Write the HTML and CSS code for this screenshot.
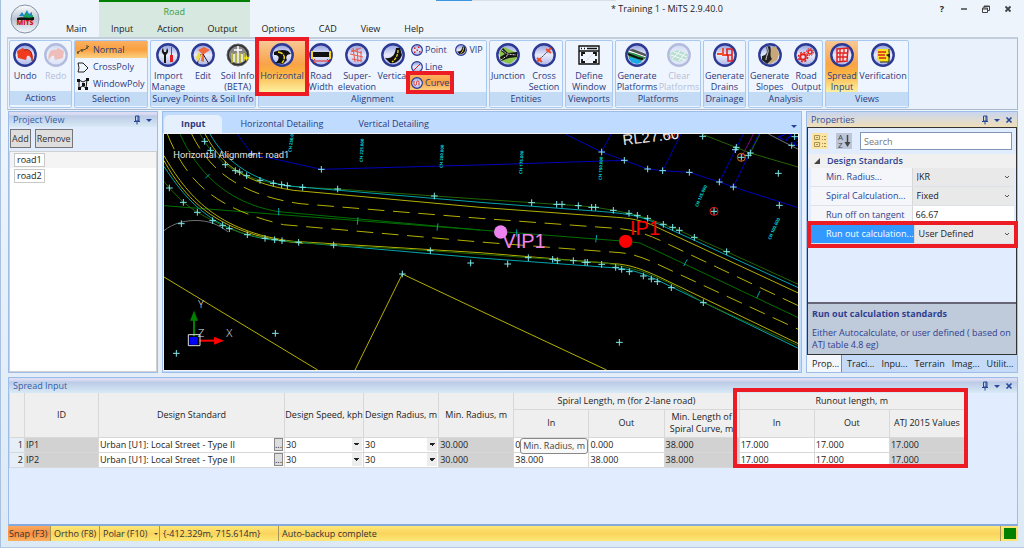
FILE: index.html
```
<!DOCTYPE html>
<html lang="en">

<head>
    <meta charset="UTF-8">
    <meta name="viewport" content="width=device-width, initial-scale=1.0">
    <title>Training 1 - MiTS 2.9.40.0</title>
    <link rel="stylesheet" href="styles.css">
</head>

<body>
    <!-- shared icon parts -->
    <svg class="defs" aria-hidden="true">
        <defs>
            <linearGradient id="discFill" x1="0" y1="0" x2="0" y2="1">
                <stop offset="0" stop-color="#8f9cdc"/>
                <stop offset="0.5" stop-color="#e8ebfb"/>
                <stop offset="1" stop-color="#aab4e6"/>
            </linearGradient>
            <linearGradient id="logoFill" x1="0" y1="0" x2="0" y2="1">
                <stop offset="0" stop-color="#ffffff"/>
                <stop offset="0.5" stop-color="#b9c4d2"/>
                <stop offset="1" stop-color="#f4f8fc"/>
            </linearGradient>
            <symbol id="disc" viewBox="0 0 24 24">
                <circle cx="12" cy="12" r="10.7" fill="url(#discFill)" stroke="#2d3a94" stroke-width="2.4"/>
            </symbol>
            <symbol id="pin" viewBox="0 0 8 10">
                <path d="M2.500 1h3.500v5h-3.500zM5 1v5M1 6.500h6M4 6.500v3" fill="none" stroke="#24479a"/>
            </symbol>
            <symbol id="down" viewBox="0 0 8 10"><path d="M1 4h6L4 7z" fill="#24479a"/></symbol>
            <symbol id="close" viewBox="0 0 8 10"><path d="M1.500 2.500l5 5m0-5l-5 5" stroke="#24479a" stroke-width="1.600"/></symbol>
            <symbol id="chevron" viewBox="0 0 6 6"><path d="M1 2l2 2 2-2" fill="none" stroke="#555"/></symbol>
        </defs>
    </svg>

    <header class="header">
        <button type="button" class="app-button" aria-label="MiTS menu">
            <svg viewBox="0 0 30 30">
                <circle cx="15" cy="15" r="14" fill="url(#logoFill)" stroke="#8594a8"/>
                <path d="M9 12l3-4 2 3 3-5 2 4 3-2v5z" fill="#1d86c8"/>
                <path d="M13 13l4-5 2 4 4-1v4h-9z" fill="#18a558"/>
                <path d="M7 14c4-2 12 1 17-1v3H7z" fill="#111"/>
                <text x="15" y="21" class="logo-text">MiTS</text>
            </svg>
        </button>
        <nav class="tabs">
            <a href="#main">Main</a>
            <div class="context">
                <span class="context-title">Road</span>
                <div class="context-tabs">
                    <a href="#input">Input</a>
                    <a href="#action">Action</a>
                    <a href="#output">Output</a>
                </div>
            </div>
            <a href="#options">Options</a>
            <a href="#cad">CAD</a>
            <a href="#view">View</a>
            <a href="#help">Help</a>
        </nav>
        <div class="title-area">
            <div class="progress"></div>
            <h1>* Training 1 - MiTS 2.9.40.0</h1>
        </div>
        <div class="window-buttons">
            <button type="button" aria-label="Help">?</button>
            <button type="button" aria-label="Minimize"><svg viewBox="0 0 10 10"><path d="M2 5h6" stroke="#444" stroke-width="1.500"/></svg></button>
            <button type="button" aria-label="Restore"><svg viewBox="0 0 10 10"><path d="M1.500 4h5v4.500h-5zM3 4V2h5.500v4.500H7M1.500 5h5M3 2.500h5" fill="none" stroke="#444"/></svg></button>
            <button type="button" aria-label="Close"><svg viewBox="0 0 10 10"><path d="M2.500 2.500l5 5m0-5l-5 5" stroke="#444" stroke-width="1.800"/></svg></button>
        </div>
    </header>

    <section class="ribbon">
        <div class="group actions">
            <div class="tools">
                <button type="button" class="tool"><svg viewBox="0 0 24 24"><use href="#disc"/><path d="M4 8l6-3 2 2c6-1 9 4 7 11-1-4-3-6-5-5l-1 4-8-2z" fill="#f03c1e"/><path d="M11 7c6-2 9 3 8 11" fill="none" stroke="#a01808"/></svg><span>Undo</span></button>
                <button type="button" class="tool" disabled><svg viewBox="0 0 24 24"><use href="#disc"/><path d="M20 8l-6-3-2 2c-6-1-9 4-7 11 1-4 3-6 5-5l1 4 8-2z" fill="#f03c1e"/></svg><span>Redo</span></button>
            </div>
            <h2>Actions</h2>
        </div>
        <div class="group selection">
            <div class="tools list">
                <button type="button" class="small active"><svg viewBox="0 0 12 12"><path d="M0 9c3-1 2-3 5-3s4-1 7-4" fill="none" stroke="#443"/><path d="M1 7v3M5 5v3M10 1v4" stroke="#443"/></svg>Normal</button>
                <button type="button" class="small"><svg viewBox="0 0 12 12"><path d="M1 2h5l5 5-4 4H1l1-4z" fill="none" stroke="#222"/></svg>CrossPoly</button>
                <button type="button" class="small"><svg viewBox="0 0 12 12"><path d="M2 2l4 2 4-2-1 8-3-2-4 2z" fill="none" stroke="#111"/><path d="M0 1h3v3H0zM9 0h3v3H9zM1 9h3v3H1zM8 9h3v3H8zM5 5h3v3H5z" fill="#111"/></svg>WindowPoly</button>
            </div>
            <h2>Selection</h2>
        </div>
        <div class="group survey">
            <div class="tools">
                <button type="button" class="tool"><svg viewBox="0 0 24 24"><use href="#disc"/><path d="M7 5l1 4h2l1-4c2 3 1 5-1 7v8H8v-8C6 10 5 8 7 5z" fill="#151515"/><path d="M15 4h1v8h-1zM14 12h3v7h-3z" fill="#e02020"/></svg><span>Import<br>Manage</span></button>
                <button type="button" class="tool"><svg viewBox="0 0 24 24"><use href="#disc"/><path d="M7 7l6-3 6 3-6 4v8l-3-1 1-7z" fill="#f26a3c"/><path d="M10 11l-4 10M12 11l6 10" stroke="#222"/><path d="M8 9l-3 5 2 5 3-6z" fill="#f2d83c"/></svg><span>Edit</span></button>
                <button type="button" class="tool"><svg viewBox="0 0 24 24"><circle cx="12" cy="12" r="11" fill="#303030" stroke="#666"/><circle cx="12" cy="12" r="9" fill="#888"/><path d="M12 3v17M8 7h8M8 11v8M16 11v8" stroke="#fff" stroke-width="1.500"/><path d="M6 10v10M10 10v10M14 10v10M18 10v8" stroke="#caca1c" stroke-width="1.300"/><path d="M18 15h5m-2.500-2.500v5" stroke="#f5e61c" stroke-width="1.500"/></svg><span>Soil Info<br>(BETA)</span></button>
            </div>
            <h2>Survey Points &amp; Soil Info</h2>
        </div>
        <div class="group alignment">
            <div class="tools">
                <button type="button" class="tool active marked"><svg viewBox="0 0 24 24"><use href="#disc"/><path d="M4 9c5-2 9-3 14-1l3 3c-4 0-6 3-4 6l-4 4-8-1c5-3 5-9-1-8z" fill="#111"/><path d="M8 9c7 1 8 6 4 11" fill="none" stroke="#f5d31c" stroke-width="1.400" stroke-dasharray="5 1"/></svg><span>Horizontal</span></button>
                <button type="button" class="tool"><svg viewBox="0 0 24 24"><use href="#disc"/><path d="M4 9h16v5H4z" fill="#111"/><path d="M3 8v8M21 8v8" stroke="#f5d31c" stroke-width="2"/><path d="M4 18h16M6 16l-2 2 2 2m12-4l2 2-2 2" fill="none" stroke="#e02020"/></svg><span>Road<br>Width</span></button>
                <button type="button" class="tool wide"><svg viewBox="0 0 24 24"><use href="#disc"/><path d="M6 7l11 3M5 11l13 3M7 16l10 2M8 5l2 14M12 5l1 14M16 8v11M6 9l10-4" fill="none" stroke="#e85a4c"/></svg><span>Super-<br>elevation</span></button>
                <button type="button" class="tool"><svg viewBox="0 0 24 24"><use href="#disc"/><path d="M15 5h4l2 7c-2 6-7 9-12 8l-5-5c7 1 10-3 11-10z" fill="#111"/><path d="M17 7c0 5-2 9-6 12" fill="none" stroke="#f5d31c" stroke-width="1.300" stroke-dasharray="3 1"/></svg><span>Vertical</span></button>
                <div class="list entities-list">
                    <button type="button" class="small"><svg viewBox="0 0 24 24"><use href="#disc"/><path d="M6 7h3v3H6zM14 5h3v3h-3zM11 11h3v3h-3zM6 15h3v3H6zM16 14h3v3h-3z" fill="#e02020"/></svg>Point</button>
                    <button type="button" class="small"><svg viewBox="0 0 24 24"><use href="#disc"/><path d="M6 18L18 6" stroke="#e02020" stroke-width="2"/></svg>Line</button>
                    <button type="button" class="small active marked"><svg viewBox="0 0 24 24"><use href="#disc"/><path d="M6 8v5c0 5 5 5 5 0v-2c0-4 5-4 5 0v6" fill="none" stroke="#e02020" stroke-width="2"/></svg>Curve</button>
                </div>
                <div class="list">
                    <button type="button" class="small"><svg viewBox="0 0 24 24"><use href="#disc"/><path d="M15 5h4l2 7c-2 6-7 9-12 8l-5-5c7 1 10-3 11-10z" fill="#111"/><path d="M17 7c0 5-2 9-6 12" fill="none" stroke="#f5d31c" stroke-width="2"/></svg>VIP</button>
                </div>
            </div>
            <h2>Alignment</h2>
        </div>
        <div class="group entities">
            <div class="tools">
                <button type="button" class="tool"><svg viewBox="0 0 24 24"><use href="#disc"/><path d="M3 9l5-5 13 6v5l-7 6-9-3z" fill="#8bc34a"/><path d="M7 5l5 5 9-1v5l-8 1-8 3-1-4 5-3-4-3z" fill="#151515"/><path d="M6 7l5 4 9 1M5 17l7-5" fill="none" stroke="#ddd" stroke-dasharray="2 1"/></svg><span>Junction</span></button>
                <button type="button" class="tool"><svg viewBox="0 0 24 24"><use href="#disc"/><path d="M8 16l8-8" stroke="#333" stroke-dasharray="2 1"/><path d="M14 6l5 4M15 9l4-4M5 15l5 4M5 19l4-4" stroke="#f04a28" stroke-width="1.800"/></svg><span>Cross<br>Section</span></button>
            </div>
            <h2>Entities</h2>
        </div>
        <div class="group viewports">
            <div class="tools">
                <button type="button" class="tool"><svg viewBox="0 0 24 24"><path d="M2 3h20v18H2zM2 8h20" fill="none" stroke="#111" stroke-width="1.400"/><path d="M4 5.500h1m2 0h1m2 0h10" stroke="#111" stroke-width="1.300"/><path d="M5 13v-3h3M16 10h3v3M5 16v3h3M16 19h3v-3" fill="none" stroke="#111" stroke-width="1.800"/><path d="M9 18l7-7" stroke="#ddd"/></svg><span>Define<br>Window</span></button>
            </div>
            <h2>Viewports</h2>
        </div>
        <div class="group platforms">
            <div class="tools">
                <button type="button" class="tool"><svg viewBox="0 0 24 24"><use href="#disc"/><path d="M3 9l18 3v3l-8 5-9-4z" fill="#27984b"/><path d="M3 7l5-1 13 5v4z" fill="#555"/><path d="M4 8l17 6" stroke="#fff"/><path d="M4 14l9 2 4 3-5 2-6-2z" fill="#19a9e5"/><path d="M3 11l10 4 5 1" fill="none" stroke="#111" stroke-width="2"/></svg><span>Generate<br>Platforms</span></button>
                <button type="button" class="tool" disabled><svg viewBox="0 0 24 24"><use href="#disc"/><path d="M3 10l8-3 10 4v4l-9 4-8-3z" fill="#48b068"/><path d="M4 12l14 5M7 9l13 5M5 16l8-8M12 18l6-8" stroke="#fff"/></svg><span>Clear<br>Platforms</span></button>
            </div>
            <h2>Platforms</h2>
        </div>
        <div class="group drainage">
            <div class="tools">
                <button type="button" class="tool"><svg viewBox="0 0 24 24"><use href="#disc"/><path d="M4 11h6M10 5v7h5" fill="none" stroke="#f04a28" stroke-width="1.800"/><path d="M14 6h5v6h-5zM15 12h4v6h-4z" fill="none" stroke="#e02020" stroke-width="1.600"/></svg><span>Generate<br>Drains</span></button>
            </div>
            <h2>Drainage</h2>
        </div>
        <div class="group analysis">
            <div class="tools">
                <button type="button" class="tool"><svg viewBox="0 0 24 24"><use href="#disc"/><path d="M13 5l5-2 3 8-2 6-7 4-5-3z" fill="#c9a878"/><path d="M4 13c5-1 6-4 4-9l4-1c2 5-1 9 2 13l-5 5-5-4z" fill="#222"/><path d="M9 4c3 5-1 8-1 13" fill="none" stroke="#ddd"/></svg><span>Generate<br>Slopes</span></button>
                <button type="button" class="tool"><svg viewBox="0 0 24 24"><use href="#disc"/><g fill="none" stroke="#e5231c"><circle cx="9" cy="14" r="2.800" stroke-width="2"/><circle cx="9" cy="14" r="4.600" stroke-width="1.600" stroke-dasharray="2 1.600"/><circle cx="16" cy="9" r="2" stroke-width="1.600"/><circle cx="16" cy="9" r="3.600" stroke-dasharray="1.500 1.300"/></g></svg><span>Road<br>Output</span></button>
            </div>
            <h2>Analysis</h2>
        </div>
        <div class="group views">
            <div class="tools">
                <button type="button" class="tool active"><svg viewBox="0 0 24 24"><use href="#disc"/><path d="M7 6l11-1-1 13-10 1z" fill="#fbe3e3" stroke="#e02020" stroke-width="1.500"/><path d="M7 10h10M7 14h10M10 6v12M14 6v5M13 11v7" stroke="#e02020" stroke-width="1.300"/></svg><span>Spread<br>Input</span></button>
                <button type="button" class="tool"><svg viewBox="0 0 24 24"><use href="#disc"/><path d="M6 6h12v13H9l-3-3z" fill="#f8e21c"/><path d="M7 9h8M7 12h7M8 15h7" stroke="#d82020" stroke-width="1.500"/><path d="M18 6v4M18 14v5H9" fill="none" stroke="#222"/><path d="M15 12l4-2v5z" fill="#222"/></svg><span>Verification</span></button>
            </div>
            <h2>Views</h2>
        </div>
    </section>

    <main class="dock">
        <aside class="panel project">
            <div class="panel-title"><h2>Project View</h2><svg><use href="#pin"/></svg><svg><use href="#down"/></svg></div>
            <div class="project-buttons">
                <button type="button">Add</button>
                <button type="button">Remove</button>
            </div>
            <ul class="roads">
                <li class="selected"><span>road1</span></li>
                <li><span>road2</span></li>
            </ul>
        </aside>

        <section class="panel drawing">
            <div class="drawing-tabs">
                <button type="button" class="current">Input</button>
                <button type="button">Horizontal Detailing</button>
                <button type="button">Vertical Detailing</button>
                <svg class="tab-menu"><use href="#down"/></svg>
            </div>
            <svg class="canvas" viewBox="12 78 1905 708" preserveAspectRatio="xMinYMin slice">
                <defs>
                    <marker id="plus" markerUnits="userSpaceOnUse" markerWidth="22" markerHeight="22" refX="11" refY="11" viewBox="0 0 22 22">
                        <path d="M1 11h20M11 1v20" stroke="#7fe9ea" stroke-width="3"/>
                    </marker>
                </defs>
                <!-- lot boundaries -->
                <g class="blue">
                    <path d="M232 78L275 138 484 184 990 170 1393 157"/>
                    <path d="M1215 78L1325 132 1393 157 1463 183 1508 188 1588 193 1678 222 1720 237 1917 300"/>
                    <path d="M1353 78L1325 132M1563 78L1508 188M1750 78L1678 222M1796 78L1720 237"/>
                </g>
                <path class="magenta" d="M1780 78L1744 148"/>
                <path class="lime" d="M1625 78L1771 135 1917 178M1800 78L1768 140"/>
                <path class="gray" d="M1825 78L1917 125M12 368C40 345 80 335 120 338S180 355 205 372"/>
                <path class="yellow" d="M12 507L473 786M585 786L727 498 990 622 1340 786"/>

                <!-- road edges -->
                <path class="lime" d="M120 78L134 100 152 127 196 170 226 188 260 203 300 217 340 226 382 233 428 238 533 243 823 264 1115 284 1190 289 1255 293 1307 298 1360 307 1407 316 1463 331 1510 349 1558 367 1603 388 1700 431 1917 530"/>
                <path class="cyan" d="M150 78C190 150 265 215 385 234L960 283 1290 308C1400 316 1430 320 1500 350L1917 540"/>
                <path class="yellow" d="M135 78C175 150 230 222 400 247L960 298 1370 328C1430 332 1460 342 1500 362L1917 556"/>
                <path class="yellow dashed" d="M95 78C140 170 220 258 420 287L960 331 1380 362C1420 366 1460 378 1500 397L1917 594"/>
                <path class="green" d="M60 78C110 190 200 285 355 311L960 366M12 293L960 366 1397 400 1440 405 1917 630"/>
                <path class="yellow dashed" d="M22 78C80 220 160 300 370 350L960 402 1380 434C1420 437 1460 453 1500 472L1917 665"/>
                <path class="yellow" d="M12 143C80 260 170 372 400 400L960 434 1360 467C1410 469 1450 485 1500 508L1917 708"/>
                <path class="yellow" d="M12 158C80 280 180 385 430 406"/>
                <path class="cyan" d="M12 175C80 280 170 385 370 399L960 450 1370 480C1410 482 1460 500 1500 520L1917 722"/>
                <path class="lime" d="M12 220L28 240 70 283 112 313 158 338 208 362 262 380 315 391 366 398 416 403 521 411 811 428 1105 449 1240 458 1325 463 1385 474 1450 491 1530 526 1632 584 1917 714"/>
                <path class="cyan" d="M136 211l13-13M356 300v22M594 328l-2 22M834 346l-3 22M1070 364v22M1310 381l-3 22M1582 454l-11 20M1800 549l-10 21"/>

                <!-- surveyed points -->
                <path class="points" d="M134 100L152 127 196 170 226 188 239 192 260 203 300 217 340 226 365 230 382 233 428 238 533 243 823 264 1115 284 1190 289 1206 289 1255 293 1295 298 1307 298 1360 307 1407 316 1432 322 1463 331 1510 349 1538 358 1558 367 1603 388 1700 431"/>
                <path class="points" d="M28 240L70 283 112 313 158 338 188 352 208 362 262 380 315 391 344 395 366 398 416 403 521 411 811 428 1105 449 1178 454 1192 458 1240 458 1275 463 1282 463 1325 469 1367 478 1385 484 1408 491 1450 504 1474 513 1492 521 1534 539 1630 584"/>
                <path class="points" d="M64 347L49 736 346 676 727 498 932 465 1043 468 1378 703 275 138 484 184 1325 132 1393 157 1463 183 1508 188 1588 193 1678 222 1720 237 1858 292 1662 310 1855 196 1628 85 1729 118 1726 125 1771 135 1765 142 1744 148 1895 112 1904 86"/>
                <path class="red" d="M1650 310a12 12 0 1 0 24 0a12 12 0 1 0-24 0M1520 78a12 12 0 0 0 24 0"/>
                <circle class="orange" cx="1744" cy="148" r="12"/>

                <!-- chainages and labels -->
                <g class="chainage">
                    <text transform="translate(394 133) rotate(-82)">CH 250.000</text>
                    <text transform="translate(608 162) rotate(-87)">CH 225.000</text>
                    <text transform="translate(848 180) rotate(-87)">CH 200.000</text>
                    <text transform="translate(1087 198) rotate(-87)">CH 175.000</text>
                    <text transform="translate(1325 216) rotate(-87)">CH 150.000</text>
                    <text transform="translate(1613 298) rotate(-66)">CH 125.000</text>
                    <text transform="translate(1832 396) rotate(-66)">CH 100.000</text>
                </g>
                <text class="level" transform="translate(1390 112) rotate(-7)">RL27.60</text>
                <text class="level-blue" transform="translate(1853 88) rotate(24)">27.3</text>
                <text class="caption" x="40" y="151">Horizontal Alignment: road1</text>
                <circle cx="1022" cy="372" r="20" fill="#ee82ee"/>
                <text class="vip" x="1027" y="419">VIP1</text>
                <circle cx="1397" cy="400" r="20" fill="#f00"/>
                <text class="ip" x="1410" y="381">IP1</text>

                <!-- axis tripod -->
                <path d="M102 685v-50" stroke="#008000" stroke-width="6"/>
                <path d="M90 638l12-30 12 30z" fill="#008000"/>
                <path d="M118 698h46" stroke="#f00" stroke-width="6"/>
                <path d="M162 686l30 12-30 12z" fill="#f00"/>
                <path d="M85 680h35v33H85z" fill="none" stroke="#ddd" stroke-width="3"/>
                <path d="M89 687h24v23H89z" fill="#00f"/>
                <g class="axis">
                    <text x="114" y="599">Y</text>
                    <text x="113" y="686">Z</text>
                    <text x="199" y="686">X</text>
                </g>
            </svg>
        </section>

        <aside class="panel properties">
            <div class="panel-title warm"><h2>Properties</h2><svg><use href="#pin"/></svg><svg><use href="#down"/></svg><svg><use href="#close"/></svg></div>
            <div class="property-box">
                <div class="property-tools">
                    <button type="button" class="categories" aria-label="Categorized"><svg viewBox="0 0 16 16"><path d="M2.500 2.500h5v4h-5zM2.500 9.500h5v4h-5zM4 4.500h2M4 11.500h2M10 3.500h1m1 0h2M10 6.500h1m1 0h2M10 10.500h1m1 0h2M10 13.500h1m1 0h2" fill="none" stroke="#a8905c"/></svg></button>
                    <button type="button" class="sort" aria-label="Sort"><svg viewBox="0 0 16 16"><text x="2" y="7">A</text><text x="2" y="15">Z</text><path d="M11.500 2v9" stroke="#444" stroke-width="1.500"/><path d="M8.500 9h6l-3 5z" fill="#444"/></svg></button>
                    <input type="text" placeholder="Search" aria-label="Search">
                </div>
                <div class="property-head"><svg viewBox="0 0 6 6"><path d="M6 0v6H0z" fill="#444"/></svg>Design Standards</div>
                <div class="property">
                    <label for="minRadius">Min. Radius...</label>
                    <div class="value"><select id="minRadius"><option>JKR</option></select><svg><use href="#chevron"/></svg></div>
                </div>
                <div class="property">
                    <label for="spiral">Spiral Calculation...</label>
                    <div class="value"><select id="spiral"><option>Fixed</option></select><svg><use href="#chevron"/></svg></div>
                </div>
                <div class="property">
                    <label for="runoff">Run off on tangent</label>
                    <input type="text" id="runoff" value="66.67">
                </div>
                <div class="property chosen marked">
                    <label for="runout">Run out calculation...</label>
                    <div class="value"><select id="runout"><option>User Defined</option></select><svg><use href="#chevron"/></svg></div>
                </div>
                <div class="property-help">
                    <h3>Run out calculation standards</h3>
                    <p>Either Autocalculate, or user defined ( based on ATJ table 4.8 eg)</p>
                </div>
            </div>
            <div class="property-tabs">
                <button type="button" class="current">Prop...</button>
                <button type="button">Traci...</button>
                <button type="button">Inpu...</button>
                <button type="button">Terrain</button>
                <button type="button">Imag...</button>
                <button type="button">Utilit...</button>
            </div>
        </aside>
    </main>

    <section class="panel spread">
        <div class="panel-title"><h2>Spread Input</h2><svg><use href="#pin"/></svg><svg><use href="#down"/></svg><svg><use href="#close"/></svg></div>
        <div class="sheet">
            <table>
                <colgroup>
                    <col class="col-number"><col class="col-id"><col class="col-standard"><col class="col-speed"><col><col><col><col><col><col><col><col>
                </colgroup>
                <thead>
                    <tr class="head-top">
                        <th rowspan="2"></th>
                        <th rowspan="2">ID</th>
                        <th rowspan="2">Design Standard</th>
                        <th rowspan="2">Design Speed, kph</th>
                        <th rowspan="2">Design Radius, m</th>
                        <th rowspan="2">Min. Radius, m</th>
                        <th colspan="3">Spiral Length, m (for 2-lane road)</th>
                        <th colspan="3">Runout length, m</th>
                    </tr>
                    <tr class="head-bottom">
                        <th>In</th>
                        <th>Out</th>
                        <th>Min. Length of Spiral Curve, m</th>
                        <th>In</th>
                        <th>Out</th>
                        <th>ATJ 2015 Values</th>
                    </tr>
                </thead>
                <tbody>
                    <tr>
                        <th>1</th>
                        <td class="locked">IP1</td>
                        <td><div class="cell">Urban [U1]: Local Street - Type II<button type="button" class="more" aria-label="Choose standard">...</button></div></td>
                        <td><select aria-label="Design speed 1"><option>30</option></select></td>
                        <td><select aria-label="Design radius 1"><option>30</option></select></td>
                        <td class="locked">30.000</td>
                        <td><div class="cell">0.000<span class="tooltip">Min. Radius, m</span></div></td>
                        <td>0.000</td>
                        <td class="locked">38.000</td>
                        <td>17.000</td>
                        <td>17.000</td>
                        <td class="locked">17.000</td>
                    </tr>
                    <tr>
                        <th>2</th>
                        <td class="locked">IP2</td>
                        <td><div class="cell">Urban [U1]: Local Street - Type II<button type="button" class="more" aria-label="Choose standard">...</button></div></td>
                        <td><select aria-label="Design speed 2"><option>30</option></select></td>
                        <td><select aria-label="Design radius 2"><option>30</option></select></td>
                        <td class="locked">30.000</td>
                        <td>38.000</td>
                        <td>38.000</td>
                        <td class="locked">38.000</td>
                        <td>17.000</td>
                        <td>17.000</td>
                        <td class="locked">17.000</td>
                    </tr>
                </tbody>
            </table>
            <div class="runout-mark"></div>
        </div>
    </section>

    <footer class="status">
        <button type="button" class="snap">Snap (F3)</button>
        <button type="button" class="ortho">Ortho (F8)</button>
        <button type="button" class="polar">Polar (F10)<svg viewBox="0 0 6 6"><path d="M1 2h4L3 4z" fill="#444"/></svg></button>
        <span class="coords">{-412.329m, 715.614m}</span>
        <span class="message">Auto-backup complete</span>
        <span class="light"></span>
    </footer>
</body>

</html>
```
FILE: styles.css
```
* {
    box-sizing: border-box;
}

body {
    font-family: 'Open Sans', 'Noto Sans', sans-serif;
    font-size: 9px;
    line-height: 12px;
    color: #222;
    margin: 0;
    padding: 0 6px 6px 7px;
    height: 100vh;
    display: flex;
    flex-direction: column;
    background: linear-gradient(#edf4fc 110px, #dceaf6);
    border-left: 1px solid #a9c1e0;
    border-bottom: 1px solid #b5cae2;
    overflow: hidden;
    white-space: nowrap;
}

h1, h2, h3, p, ul {
    font-size: inherit;
    font-weight: normal;
    margin: 0;
    padding: 0;
}

button, input, select {
    font: inherit;
    color: inherit;
    margin: 0;
    padding: 0;
    border: 0;
    background: none;
    border-radius: 0;
}

a {
    color: inherit;
    text-decoration: none;
}

svg {
    display: block;
    flex: none;
}

.defs {
    position: absolute;
    width: 0;
    height: 0;
}

.marked {
    outline: 4px solid #ed1c24;
    position: relative;
    z-index: 2;
}

/* title and menu tabs */
.header {
    height: 37px;
    display: flex;
    flex: none;
}

.app-button {
    width: 46px;
    padding: 3px 2px;
}

.app-button svg {
    width: 30px;
    height: 30px;
}

.logo-text {
    font-size: 7px;
    font-weight: 800;
    fill: #d01818;
    text-anchor: middle;
}

.tabs {
    display: flex;
    align-items: flex-end;
}

.tabs a {
    padding: 2px 12px 0;
    height: 16px;
}

.context {
    height: 37px;
    border-top: 2px solid #008000;
    background-color: #d7e8e0;
    display: flex;
    flex-direction: column;
    justify-content: space-between;
}

.context-title {
    text-align: center;
    color: #3a9b3a;
    padding-top: 4px;
}

.context-tabs {
    display: flex;
}

.title-area {
    flex: 1;
    text-align: center;
}

.progress {
    height: 1px;
    width: 180px;
    background: linear-gradient(90deg, #3c96e0 36px, #dcdfe4 36px);
}

.title-area h1 {
    padding-top: 2px;
}

.window-buttons {
    width: 120px;
    display: flex;
    justify-content: flex-end;
    gap: 2px;
    height: 17px;
    align-items: center;
}

.window-buttons button {
    width: 20px;
    font-weight: bold;
    display: flex;
    justify-content: center;
}

.window-buttons svg {
    width: 10px;
    height: 10px;
}

/* ribbon */
.ribbon {
    height: 73px;
    flex: none;
    display: flex;
    gap: 2px;
    padding: 1px 0 1px 1px;
    background-color: #e9f2fc;
    border: 1px solid #a9b8ca;
    border-top: 2px solid #c2cedc;
    border-left-color: #c2cedc;
    color: #2b3a80;
    margin-left: -1px;
}

.group {
    display: flex;
    flex-direction: column;
    flex: none;
    border: 1px solid #a9c9f0;
    border-radius: 2px;
    background-color: #eef5fe;
}

.group h2 {
    flex: 1;
    text-align: center;
    background-color: #c3dbf4;
    line-height: 14px;
    margin-bottom: 2px;
}

.tools {
    display: flex;
    height: 51px;
}

.tool {
    flex: 1 1 0;
    min-width: 0;
    display: flex;
    flex-direction: column;
    align-items: center;
    padding-top: 2px;
    line-height: 11px;
}

.tool svg {
    width: 24px;
    height: 24px;
    margin-bottom: 3px;
}

.tool:disabled {
    opacity: 0.3;
}

.active {
    background: linear-gradient(#f8c896, #f9a348 45%, #fbb040 60%, #fdf0a0);
}

.list {
    display: flex;
    flex-direction: column;
}

.small {
    height: 17px;
    display: flex;
    align-items: center;
    gap: 4px;
    padding: 0 2px;
}

.small svg {
    width: 12px;
    height: 12px;
}

.small.active {
    background: linear-gradient(#fbb060, #f9a040 50%, #fdd080);
}

.actions { width: 63px; }
.selection { width: 74px; }
.survey { width: 106px; }
.alignment { width: 229px; }
.entities { width: 74px; }
.viewports { width: 48px; }
.platforms { width: 86px; }
.drainage { width: 43px; }
.analysis { width: 75px; }
.views { width: 84px; }

.alignment .tool {
    flex: 0 0 32px;
}

.alignment .tool.wide {
    flex-basis: 40px;
}

.alignment .tool.active {
    flex-basis: 46px;
}

.alignment .small {
    gap: 2px;
    padding: 0 1px;
}

.entities-list {
    margin: 0 4px 0 1px;
}

.entities-list .marked {
    height: 15px;
}

.analysis .tool:first-child {
    flex-grow: 1.3;
}

.views .active {
    flex: none;
    width: 32px;
}

/* docked panels */
.dock {
    flex: 1;
    min-height: 0;
    display: flex;
    gap: 4px;
    padding: 1px 0 4px;
}

.panel {
    display: flex;
    flex-direction: column;
    border: 1px solid #9dbde8;
    background-color: #e1edfe;
    min-width: 0;
}

.panel-title {
    display: flex;
    align-items: center;
    gap: 2px;
    height: 15px;
    flex: none;
    padding: 0 3px 0 4px;
    color: #3060a8;
    background: linear-gradient(#dcdcf4 2px, #bccbe6 4px, #d8e9f6);
}

.panel-title h2 {
    flex: 1;
}

.panel-title svg {
    width: 10px;
    height: 10px;
}

.warm {
    background: linear-gradient(#c9d6f0, #f0dfb8);
    color: #34509a;
}

.project {
    width: 150px;
    flex: none;
}

.project-buttons {
    display: flex;
    gap: 4px;
    padding: 2px 1px 3px;
}

.project-buttons button {
    height: 19px;
    padding: 0 1px;
    border: 1px solid #777;
    background-color: #dedede;
    color: #333;
}

.roads {
    flex: 1;
    background-color: #fff;
    border: 1px solid #d0d0d0;
    list-style: none;
}

.roads li {
    height: 16px;
    padding: 1px 4px;
    display: flex;
}

.roads span {
    border: 1px solid #c8c8c8;
    padding: 0 2px;
    line-height: 12px;
    background-color: #fff;
}

.roads .selected {
    background-color: #f4f4f4;
}

.drawing {
    flex: 1;
    padding: 3px 2px 1px 0;
    background-color: #bfdbff;
}

.drawing-tabs {
    height: 18px;
    flex: none;
    display: flex;
    color: #2b3a80;
}

.drawing-tabs button {
    padding: 0 17px;
    margin-left: 1px;
}

.drawing-tabs .current {
    font-weight: bold;
    background-color: #e6f0fc;
    border-radius: 5px 5px 0 0;
}

.tab-menu {
    width: 10px;
    height: 10px;
    margin: 6px 0 0 auto;
}

.canvas {
    flex: 1;
    min-height: 0;
    width: 100%;
    background-color: #000;
    border: 1px solid #f4f4f4;
    fill: none;
    stroke-width: 3;
}

.canvas text {
    stroke: none;
}

.blue { stroke: #0000b8; }
.magenta { stroke: #800080; }
.lime { stroke: #246400; }
.green { stroke: #007000; }
.gray { stroke: #707070; }
.yellow { stroke: #b4b000; }
.cyan { stroke: #00a4ac; }
.red { stroke: #f01818; }
.orange { stroke: #e07020; }

.dashed {
    stroke-dasharray: 50 26;
}

.canvas .points {
    marker: url(#plus);
}

.chainage {
    font-size: 13px;
    font-weight: bold;
    fill: #00d8dc;
}

.level {
    font: 45px 'Liberation Sans', sans-serif;
    fill: #e8e8e8;
}

.level-blue {
    font: 36px 'Liberation Sans', sans-serif;
    fill: #0000e0;
}

.caption {
    font: 28px Roboto, sans-serif;
    fill: #e4e4e4;
}

.vip, .ip {
    font: 60px 'Liberation Sans', sans-serif;
    fill: #ee82ee;
}

.ip {
    fill: #f00;
}

.axis {
    font: 300 34px 'Open Sans', sans-serif;
    fill: #e0e0e0;
}

/* property grid */
.properties {
    width: 212px;
    flex: none;
}

.property-box {
    flex: 1;
    min-height: 0;
    display: flex;
    flex-direction: column;
    border: 1px solid #333;
    color: #2f3f8f;
}

.property-tools {
    height: 26px;
    flex: none;
    display: flex;
    align-items: center;
    gap: 8px;
    padding: 0 4px;
}

.property-tools button {
    width: 16px;
    height: 16px;
    background-color: #fbe5a0;
}

.property-tools .sort {
    background-color: #bcc6d6;
}

.sort text {
    font-size: 8px;
    fill: #444;
}

.property-tools input {
    flex: 1;
    min-width: 0;
    height: 18px;
    border: 1px solid #8098b8;
    background-color: #fff;
    padding: 0 3px;
}

.property-tools input::placeholder {
    color: #777;
}

.property-head {
    height: 14px;
    display: flex;
    align-items: center;
    gap: 7px;
    padding-left: 6px;
    font-weight: 600;
    background-color: #f0f0f0;
}

.property-head svg {
    width: 6px;
    height: 6px;
}

.property {
    height: 19px;
    flex: none;
    display: flex;
    background-color: #f4f6fa;
    border-bottom: 1px solid #dde2ea;
    margin: 0 2px 0 3px;
}

.property label {
    flex: 0 0 50%;
    padding: 3px 0 0 15px;
    border-right: 1px solid #d8d8d8;
}

.property > input {
    flex: 1;
    min-width: 0;
    padding: 0 3px;
    background-color: #fff;
    color: #222;
}

.value {
    flex: 1;
    display: flex;
    align-items: center;
    padding-right: 4px;
    background-color: #e9e9e9;
}

.value select {
    flex: 1;
    height: 100%;
    padding-left: 4px;
    appearance: none;
    color: #222;
}

.value svg {
    width: 6px;
    height: 6px;
}

.chosen label {
    background-color: #3399ff;
    color: #fff;
}

.property-help {
    margin-top: auto;
    height: 52px;
    padding: 4px;
    border-top: 2px solid #667;
    background-color: #bfcadb;
    white-space: normal;
}

.property-help h3 {
    font-weight: bold;
    margin-bottom: 7px;
}

.property-tabs {
    display: flex;
    justify-content: space-between;
    height: 17px;
    background-color: #c4daf6;
    padding-right: 6px;
}

.property-tabs button {
    padding: 0 2px 0 5px;
}

.property-tabs .current {
    background-color: #f3f7fc;
    border-right: 1px solid #889;
}

/* spread input */
.spread {
    height: 149px;
    flex: none;
    border-bottom: 2px solid #86aade;
}

.sheet {
    position: relative;
    width: 956px;
}

table {
    width: 100%;
    table-layout: fixed;
    border-collapse: collapse;
}

.col-number { width: 15px; }
.col-id { width: 74px; }
.col-standard { width: 186px; }
.col-speed { width: 79px; }

th, td {
    padding: 0 1px;
    height: 15px;
    border: 1px solid #d8d8d8;
    font-weight: normal;
    line-height: 12px;
    background-color: #fff;
    text-align: left;
}

thead th {
    padding: 0;
    background-color: #efefef;
    text-align: center;
    border-top: 0;
}

.head-top th {
    height: 16px;
}

.head-bottom th {
    height: 28px;
    white-space: normal;
}

tbody th {
    background-color: #e6eef8;
    text-align: right;
}

td.locked {
    background-color: #d2d2d2;
}

td select {
    display: block;
    width: 100%;
    height: 13px;
    appearance: none;
    background: linear-gradient(to bottom right, #222 50%, transparent 50%) right 2px center / 3px 3px no-repeat, linear-gradient(to bottom left, #222 50%, transparent 50%) right 5px center / 3px 3px no-repeat, linear-gradient(#ededed, #ededed) right / 10px 100% no-repeat;
}

.cell {
    display: flex;
    justify-content: space-between;
    align-items: center;
    position: relative;
}

.more {
    width: 9px;
    height: 13px;
    border: 1px solid #888;
    background-color: #ddd;
    line-height: 8px;
}

.tooltip {
    position: absolute;
    left: 5px;
    top: -1px;
    height: 16px;
    padding: 1px 2px;
    border: 1px solid #888;
    border-radius: 3px;
    background-color: #f8f8f8;
    color: #444;
    z-index: 2;
}

/* frame round the runout columns */
.runout-mark {
    position: absolute;
    top: -5px;
    right: -3px;
    width: 235px;
    height: 80px;
    border: 4px solid #ed1c24;
}

/* status bar */
.status {
    height: 15px;
    flex: none;
    display: flex;
    align-items: center;
    background: linear-gradient(#fde878, #fbd45c 50%, #fde878);
    color: #333;
}

.status > * {
    height: 15px;
    padding: 0 4px 0 3px;
    line-height: 16px;
    border-right: 1px solid #a89858;
    text-align: left;
}

.status .snap {
    width: 43px;
    padding: 0 1px;
    background: linear-gradient(#fba860, #f89040 50%, #fcb060);
}

.status .ortho {
    width: 49px;
}

.status .polar {
    width: 60px;
    display: flex;
    align-items: center;
    justify-content: space-between;
    padding-right: 0;
}

.polar svg {
    width: 6px;
    height: 6px;
}

.status .coords {
    width: 119px;
}

.status .message {
    flex: 1;
}

.status .light {
    width: 12px;
    height: 11px;
    margin: 0 2px 0 3px;
    background-color: #008000;
    border: 0;
}
```
